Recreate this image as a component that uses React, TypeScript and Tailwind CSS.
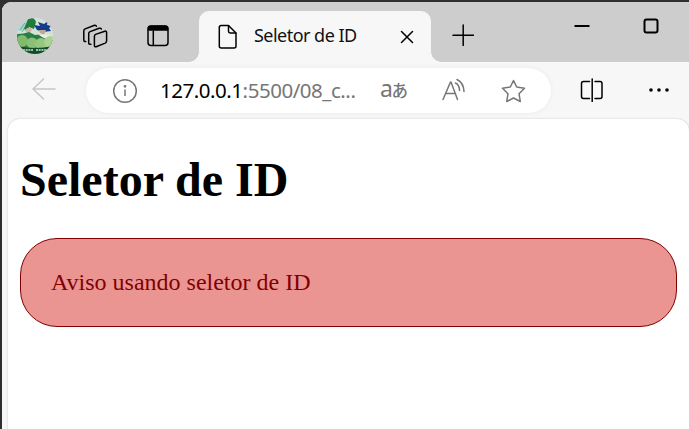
import type { ReactNode } from "react";

const ui = "font-['Noto_Sans','Open_Sans',sans-serif]";

function Icon({ w, h, className = "", stroke = 1.5, children }: { w: number; h: number; className?: string; stroke?: number; children: ReactNode }) {
  return (
    <svg width={w} height={h} viewBox={`0 0 ${w} ${h}`} fill="none" stroke="currentColor" strokeWidth={stroke} strokeLinecap="round" strokeLinejoin="round" className={`block shrink-0 ${className}`}>
      {children}
    </svg>
  );
}

function Avatar() {
  return (
    <svg width="36" height="36" viewBox="0 0 36 36" className="mt-4 ml-[15px] block shrink-0">
      <defs>
        <clipPath id="avatar"><circle cx="18" cy="18" r="18" /></clipPath>
      </defs>
      <g clipPath="url(#avatar)">
        <rect width="36" height="36" fill="#d5e2d6" />
        <path d="M3 5 12 1 10 9 4 13 0 13Z" fill="#a9d5cf" />
        <path d="M3 12 8 5M5 14 10 6" stroke="#5cae9f" />
        <path d="M11 1Q17-2 19 4L17 11 12 9 10 13 7 11Z" fill="#207b3c" />
        <path d="M8 12Q11 8 15 11L13 15 9 14Z" fill="#c7b7a5" />
        <path d="M17 7 23 8 21 4 27 6 31 3 30 7 35 8 32 10 34 13 26 14 20 12Z" fill="#173c8a" />
        <path d="M22 12 29 12 27 17 23 15Z" fill="#bca993" />
        <path d="M0 16Q7 16 12 14L18 17Q26 16 36 22V31H0Z" fill="#287e45" />
        <path d="M22 17Q28 15 36 19V22Q28 22 22 17Z" fill="#e8ede5" />
        <circle cx="5" cy="23" r="6" fill="#82b96d" />
        <circle cx="15" cy="25" r="5.5" fill="#8bc078" />
        <circle cx="24" cy="26" r="6" fill="#96c77f" />
        <circle cx="33" cy="24" r="6" fill="#aad293" />
        <path d="M0 28Q18 32 36 28V36H0Z" fill="#124d29" />
        <path d="M6 32H16M19 32H30" stroke="#d4e7cc" strokeWidth="1.5" strokeDasharray="2 .7" />
      </g>
    </svg>
  );
}

function TabBar() {
  return (
    <header className="flex h-[60px] shrink-0 items-start bg-[#cdcdcd]">
      <Avatar />
      <Icon w={28} h={28} className="mt-[21px] ml-7">
        <path d="M14.6 11.4 23.8 8.2Q25.6 7.7 25.6 9.5V18.1Q25.6 19.5 24.2 20.1L15.2 23.7Q13.4 24.3 13.4 22.5V13.4Q13.4 12 14.6 11.4Z" />
        <path d="M9.9 21.2Q7.7 21.6 7.7 19.8V10.6Q7.7 9.2 9.1 8.6L18.1 5.3Q19.8 4.8 20.4 6" />
        <path d="M4.8 18.5Q2.8 18.8 2.8 17V7.9Q2.8 6.5 4.2 5.9L12.9 2.5Q14.9 1.8 15.4 3.3" />
      </Icon>
      <Icon w={22} h={22} className="mt-[23px] ml-[38px]">
        <rect x="1" y="1" width="20" height="19.5" rx="3" />
        <path d="M1.5 5V3Q1.5 1.2 3.5 1.2H18.5Q20.5 1.2 20.5 3V5Z" fill="currentColor" />
        <path d="M6.3 6V20" />
      </Icon>
      <div className="relative mt-[9px] ml-[30px] flex h-[51px] w-[232px] shrink-0 rounded-t-[10px] bg-[#f7f7f7]">
        <i className="absolute bottom-0 -left-[10px] size-[10px] bg-[radial-gradient(circle_at_0_0,transparent_9.5px,#f7f7f7_10px)]" />
        <i className="absolute -right-[10px] bottom-0 size-[10px] bg-[radial-gradient(circle_at_100%_0,transparent_9.5px,#f7f7f7_10px)]" />
        <Icon w={20} h={26} className="mt-[13px] ml-[19px]">
          <path d="M3.2 1.5H10.5L18 9V22Q18 24 16 24H3.2Q1.3 24 1.3 22V3.4Q1.3 1.5 3.2 1.5Z" />
          <path d="M10.5 1.8V7.3Q10.5 9 12.2 9H17.7" />
        </Icon>
        <span className={`mt-3 ml-4 w-[106px] whitespace-nowrap text-[18px] leading-6 tracking-[-0.53px] text-[#111] ${ui}`}>Seletor de ID</span>
        <Icon w={14} h={14} className="mt-[19px] ml-10">
          <path d="M1.5 1.5 12.5 12.5M12.5 1.5 1.5 12.5" />
        </Icon>
      </div>
      <Icon w={22} h={22} className="mt-[22px] ml-[21px]">
        <path d="M1 11.2H21.5M11.2 1V21.5" />
      </Icon>
      <Icon w={16} h={4} stroke={2} className="mt-[22px] ml-[100px]">
        <path d="M.5 2H15.5" strokeLinecap="butt" />
      </Icon>
      <Icon w={16} h={16} stroke={2} className="mt-4 ml-[53px]">
        <rect x="1.5" y="1.5" width="13" height="13" rx="2" />
      </Icon>
    </header>
  );
}

function Toolbar() {
  return (
    <div className="flex h-[57px] shrink-0 items-start bg-[#f7f7f7]">
      <Icon w={26} h={24} className="mt-[15px] ml-7 text-[#c6c6c6]">
        <path d="M13.5 2 3 12 13.5 22M3 12H25" />
      </Icon>
      <div className="mt-1.5 ml-[30px] flex h-[45px] w-[465px] shrink-0 items-start rounded-full bg-white text-[#767676] shadow-[0_0_5px_rgba(0,0,0,0.06)]">
        <Icon w={26} h={26} className="mt-2.5 ml-[26px]">
          <circle cx="13" cy="13" r="11.3" />
          <path d="M13 11.5V18" strokeLinecap="butt" />
          <circle cx="13" cy="8.3" r=".6" fill="currentColor" />
        </Icon>
        <span className={`mt-2 ml-[22px] w-[200px] shrink-0 whitespace-nowrap text-[20.5px] leading-7 tracking-[-0.47px] ${ui}`}>
          <span className="text-black">127.0.0.1</span>:5500/08_c...
        </span>
        <span className="mt-1.5 ml-5 flex w-[28px] shrink-0 items-baseline leading-7">
          <span className={`text-[23px] tracking-[-1.4px] ${ui}`}>a</span>
          <span className="font-['Noto_Sans_CJK_JP',sans-serif] text-[16.5px] leading-none font-medium">あ</span>
        </span>
        <Icon w={26} h={26} className="mt-2.5 ml-[33px]">
          <path d="M2 21.5 9.5 4H10L16.5 21.5M4.5 15.5H14.3" />
          <path d="M14.5 5Q18.5 7 18.5 12.5M16 1.5Q22.5 4.5 23 13.5" />
        </Icon>
        <Icon w={26} h={26} className="mt-2.5 ml-[33px]">
          <path d="M13.5 2.5 16.7 9 24.5 10.2 19 15.7 20.3 23.5 13.5 20 6.7 23.5 8 15.7 2.5 10.2 10.3 9Z" />
        </Icon>
      </div>
      <Icon w={24} h={24} className="mt-4 ml-7">
        <path d="M10.5 3.5H4.5Q2.5 3.5 2.5 5.5V18.5Q2.5 20.5 4.5 20.5H10.5M16 3.5H21Q23 3.5 23 5.5V18.5Q23 20.5 21 20.5H16M13.2 1V23.5" />
      </Icon>
      <Icon w={22} h={6} className="mt-[25px] ml-[45px]">
        <g fill="currentColor" stroke="none"><circle cx="3" cy="3" r="1.8" /><circle cx="11" cy="3" r="1.8" /><circle cx="19" cy="3" r="1.8" /></g>
      </Icon>
    </div>
  );
}

export default function App() {
  return (
    <div className="h-[429px] w-[689px] overflow-hidden bg-[#302f2f] pt-0.5 pl-0.5 text-black">
      <div className="flex h-full flex-col overflow-hidden rounded-tl-[9px] bg-[#f7f7f7]">
        <TabBar />
        <Toolbar />
        <main className="ml-1.5 flex-1 rounded-t-xl bg-white px-3 font-['Liberation_Serif',serif] shadow-[0_0_2px_rgba(0,0,0,0.22)]">
          <h1 className="pt-[33px] text-[48px] leading-[55px] font-bold">Seletor de ID</h1>
          <p className="mt-[31px] h-[89px] rounded-[37px] border border-[#800000] bg-[#eb9593] px-[30px] pt-[30px] text-[24px] leading-[27px] text-[#800000]">Aviso usando seletor de ID</p>
        </main>
      </div>
    </div>
  );
}
